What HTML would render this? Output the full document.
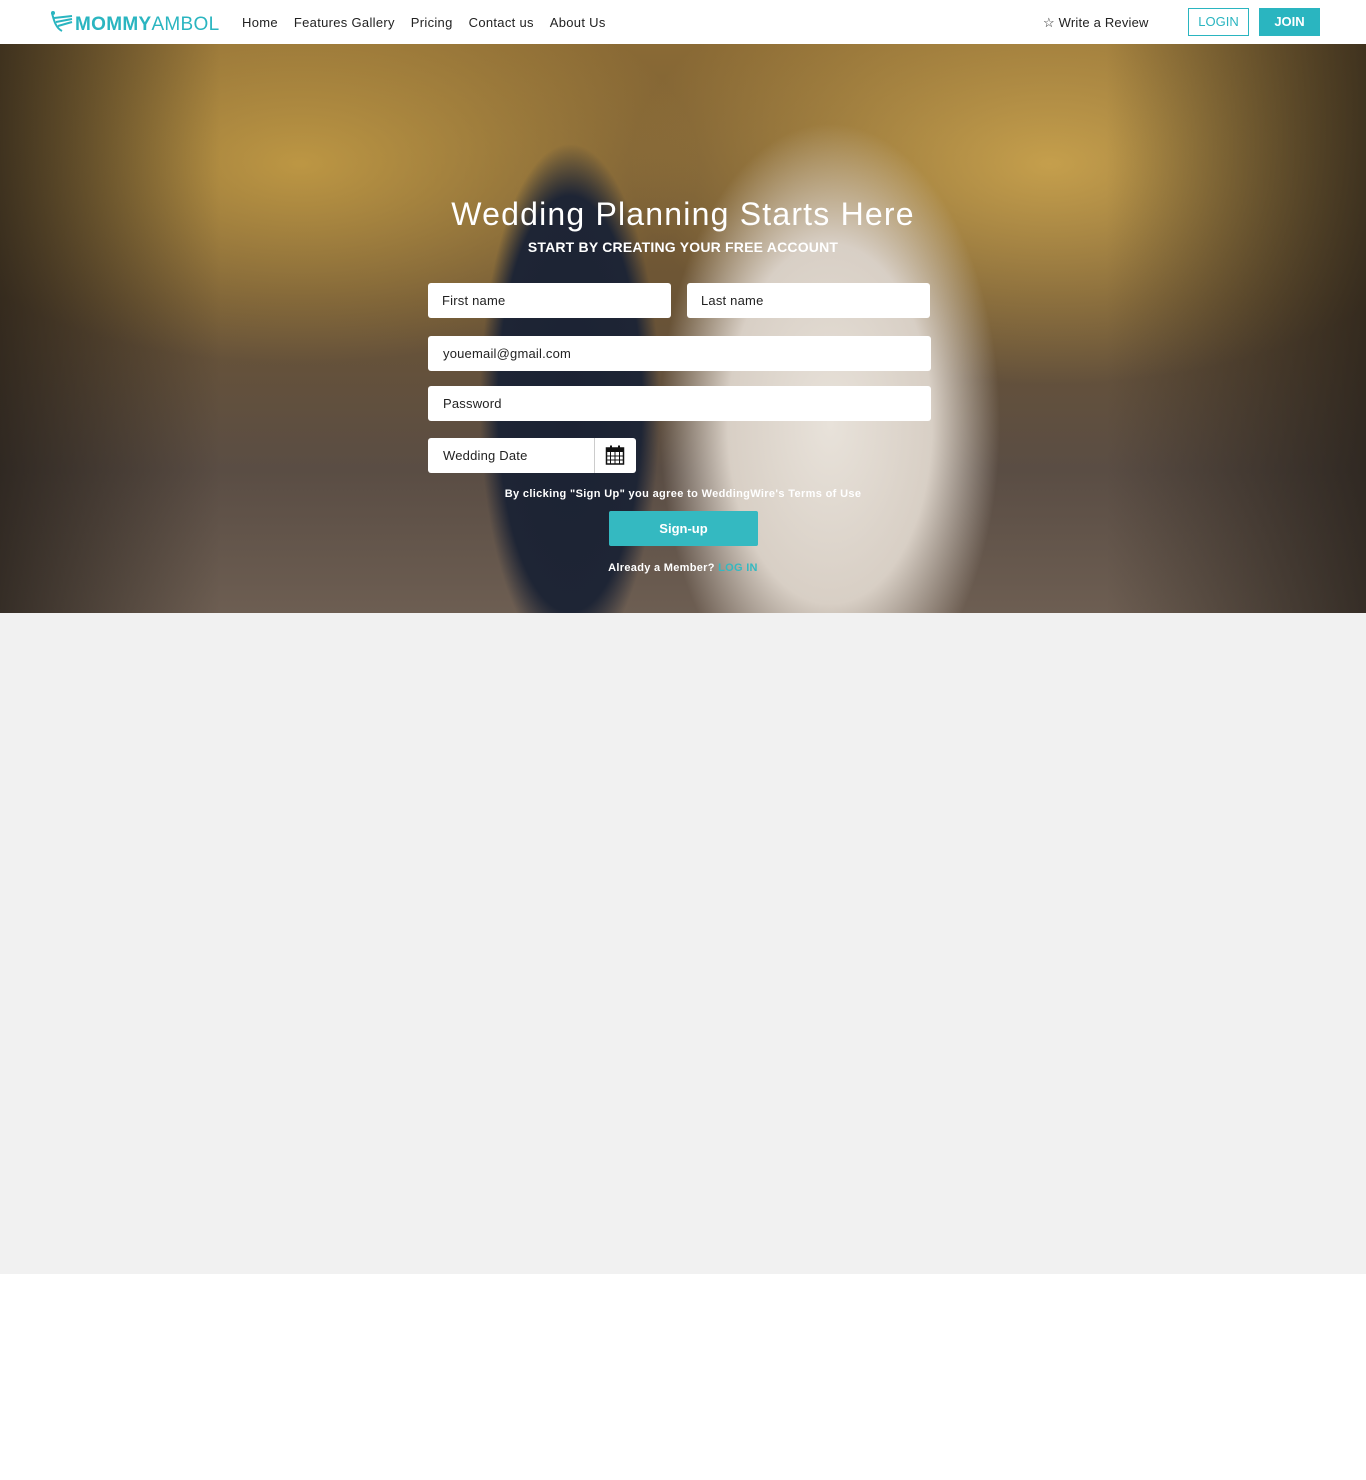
<!DOCTYPE html>
<html><head><meta charset="utf-8"><style>
*{margin:0;padding:0;box-sizing:border-box}
body{width:1366px;height:1480px;background:#fff;font-family:"Liberation Sans",sans-serif;position:relative;overflow:hidden}
.nav{height:44px;position:relative;background:#fff}
.logo{position:absolute;left:49px;top:10px;font-size:19px;color:#2ab5c0;letter-spacing:0.3px}
.logo b{font-weight:bold}
.links{position:absolute;left:242px;top:15px;font-size:13px;color:#222;letter-spacing:0.3px;white-space:nowrap}
.links span{margin-right:16px}
.rev{position:absolute;left:1043px;top:15px;font-size:13px;color:#222;letter-spacing:0.2px}
.login{position:absolute;left:1188px;top:8px;width:61px;height:28px;border:1px solid #2ab5c0;color:#2ab5c0;font-size:13px;text-align:center;line-height:26px}
.join{position:absolute;left:1259px;top:8px;width:61px;height:28px;background:#2ab5c0;color:#fff;font-size:13px;font-weight:bold;text-align:center;line-height:28px}
.hero{position:absolute;left:0;top:44px;width:1366px;height:569px;overflow:hidden;
background:
radial-gradient(ellipse 90px 260px at 570px 360px,#1b2233 0%,#1e2535 80%,transparent 100%),
radial-gradient(ellipse 170px 300px at 830px 380px,#e8e2da 0%,#d8cfc5 60%,transparent 100%),
radial-gradient(ellipse 400px 200px at 300px 120px,rgba(200,160,70,.85),transparent),
radial-gradient(ellipse 420px 220px at 1050px 120px,rgba(210,170,80,.85),transparent),
linear-gradient(180deg,#8a6a35 0%,#6b5435 45%,#5a4d44 75%,#6d5e52 100%);}
.dl{position:absolute;left:0;top:0;width:220px;height:569px;background:linear-gradient(90deg,rgba(30,25,20,.7),transparent)}
.dr{position:absolute;right:0;top:0;width:260px;height:569px;background:linear-gradient(270deg,rgba(30,25,20,.7),transparent)}
h1{position:absolute;left:0;width:1366px;top:152px;text-align:center;color:#fff;font-size:32px;font-weight:normal;letter-spacing:1.2px}
h2{position:absolute;left:0;width:1366px;top:195px;text-align:center;color:#fff;font-size:14px;font-weight:bold;letter-spacing:0.2px}
.in{position:absolute;background:#fff;border-radius:3px;height:35px;font-size:13px;color:#222;line-height:35px;padding-left:14px;letter-spacing:0.2px}
.cal{position:absolute;left:594px;top:394px;width:42px;height:35px;border-left:1px solid #ccc}
.terms{position:absolute;left:0;width:1366px;top:444px;text-align:center;color:#fff;font-size:11px;font-weight:bold;letter-spacing:0.35px}
.btn{position:absolute;left:609px;top:467px;width:149px;height:35px;background:#34b9c1;color:#fff;font-weight:bold;font-size:13px;text-align:center;line-height:35px;border-radius:2px}
.mem{position:absolute;left:0;width:1366px;top:518px;text-align:center;color:#fff;font-size:11px;font-weight:bold;letter-spacing:0.3px}
.gray{position:absolute;left:0;top:613px;width:1366px;height:661px;background:#f1f1f1}
</style></head><body>
<div class="nav">
<div class="logo"><svg width="26" height="24" viewBox="0 0 26 24" style="vertical-align:-4px"><path d="M3 3c2 8 4 15 10 18M5 8l18-2M7 12l16-3M9 16l14-4" stroke="#2ab5c0" stroke-width="2" fill="none"/><circle cx="4" cy="3" r="2" fill="#2ab5c0"/></svg><b>MOMMY</b>AMBOL</div>
<div class="links"><span>Home</span><span>Features Gallery</span><span>Pricing</span><span>Contact us</span><span>About Us</span></div>
<div class="rev">☆ Write a Review</div>
<div class="login">LOGIN</div><div class="join">JOIN</div>
</div>
<div class="hero"><div class="dl"></div><div class="dr"></div>
<h1>Wedding Planning Starts Here</h1>
<h2>START BY CREATING YOUR FREE ACCOUNT</h2>
<div class="in" style="left:428px;top:239px;width:243px">First name</div>
<div class="in" style="left:687px;top:239px;width:243px">Last name</div>
<div class="in" style="left:428px;top:292px;width:503px;padding-left:15px">youemail@gmail.com</div>
<div class="in" style="left:428px;top:342px;width:503px;padding-left:15px">Password</div>
<div class="in" style="left:428px;top:394px;width:208px;padding-left:15px">Wedding Date</div>
<div class="cal"><svg width="20" height="20" viewBox="0 0 20 20" style="position:absolute;left:10px;top:7px"><rect x="1.5" y="3" width="17" height="16" fill="none" stroke="#111" stroke-width="1.5"/><rect x="1.5" y="3" width="17" height="4" fill="#111"/><rect x="5" y="0.5" width="2" height="4" fill="#111"/><rect x="13" y="0.5" width="2" height="4" fill="#111"/><path d="M1.5 11h17M1.5 15h17M5.5 7v12M10 7v12M14.5 7v12" stroke="#111" stroke-width="1"/></svg></div>
<div class="terms">By clicking "Sign Up" you agree to WeddingWire's Terms of Use</div>
<div class="btn">Sign-up</div>
<div class="mem">Already a Member? <span style="color:#34b9c1">LOG IN</span></div>
</div>
<div class="gray"></div>
</body></html>
